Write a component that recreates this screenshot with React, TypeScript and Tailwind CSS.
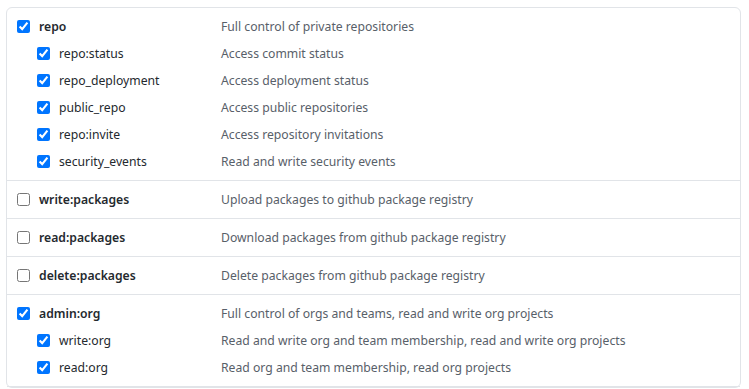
import React from "react";

type Row = { name: string; desc: string; checked: boolean; child?: boolean };
type Group = Row[];

const groups: Group[] = [
  [
    { name: "repo", desc: "Full control of private repositories", checked: true },
    { name: "repo:status", desc: "Access commit status", checked: true, child: true },
    { name: "repo_deployment", desc: "Access deployment status", checked: true, child: true },
    { name: "public_repo", desc: "Access public repositories", checked: true, child: true },
    { name: "repo:invite", desc: "Access repository invitations", checked: true, child: true },
    { name: "security_events", desc: "Read and write security events", checked: true, child: true },
  ],
  [{ name: "write:packages", desc: "Upload packages to github package registry", checked: false }],
  [{ name: "read:packages", desc: "Download packages from github package registry", checked: false }],
  [{ name: "delete:packages", desc: "Delete packages from github package registry", checked: false }],
  [
    { name: "admin:org", desc: "Full control of orgs and teams, read and write org projects", checked: true },
    { name: "write:org", desc: "Read and write org and team membership, read and write org projects", checked: true, child: true },
    { name: "read:org", desc: "Read org and team membership, read org projects", checked: true, child: true },
  ],
];

export default function App() {
  return (
    <div className="bg-white w-[749px] h-[389px] overflow-hidden pt-[7px] pl-[6px]" style={{ fontFamily: '"Noto Sans", "Open Sans", sans-serif' }}>
      <div className="w-[735px] border border-[#e1e4e8] rounded-[6px] text-[12.2px]">
        {groups.map((g, gi) => (
          <div key={gi} className="py-[5px] border-b border-[#e1e4e8]">
            {g.map((r) => (
              <div key={r.name} className="flex items-center h-[27px] pt-[1px]">
                <div className={`flex items-center w-[214px] ${r.child ? "pl-[30px]" : "pl-[10px]"}`}>
                  <input type="checkbox" defaultChecked={r.checked} className="m-0 w-[13px] h-[13px] shrink-0" />
                  <span className={`ml-[9px] text-[#24292e] ${r.child ? "font-normal" : "font-semibold"}`}>{r.name}</span>
                </div>
                <div className="text-[#586069]">{r.desc}</div>
              </div>
            ))}
          </div>
        ))}
      </div>
    </div>
  );
}
